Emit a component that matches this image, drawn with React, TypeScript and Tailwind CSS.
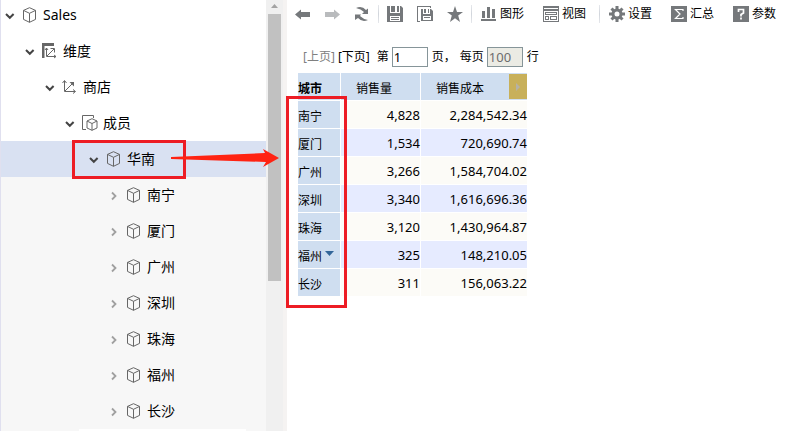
import type { ReactNode } from "react";

type NodeIcon = "cube" | "dimensions" | "axes" | "members";
type TreeItem = { name: string; depth: number; icon: NodeIcon; open?: boolean };

const tree: TreeItem[] = [
  { name: "Sales", depth: 0, icon: "cube", open: true },
  { name: "维度", depth: 1, icon: "dimensions", open: true },
  { name: "商店", depth: 2, icon: "axes", open: true },
  { name: "成员", depth: 3, icon: "members", open: true },
];

const cities = ["南宁", "厦门", "广州", "深圳", "珠海", "福州", "长沙"];

const rows = [
  ["南宁", "4,828", "2,284,542.34"],
  ["厦门", "1,534", "720,690.74"],
  ["广州", "3,266", "1,584,704.02"],
  ["深圳", "3,340", "1,616,696.36"],
  ["珠海", "3,120", "1,430,964.87"],
  ["福州", "325", "148,210.05"],
  ["长沙", "311", "156,063.22"],
];

const indents = ["pl-1", "pl-6", "pl-11", "pl-16", "pl-[88px]", "pl-[108px]"];

const cubePath = "M7.5 .7 13.5 3.4V12.4L7.5 15.3 1.5 12.4V3.4ZM1.5 3.4 7.5 6.3 13.5 3.4M7.5 6.3V15.3";

function TreeIcon({ kind }: { kind: NodeIcon }) {
  return (
    <svg width="16" height="16" viewBox="0 0 16 16" fill="none" stroke="#666" strokeWidth="1" aria-hidden="true">
      {kind === "cube" && <path d={cubePath} />}
      {kind === "dimensions" && (
        <>
          <path d="M0 0H12V3H2.5V15H0Z" fill="#666" stroke="none" />
          <path d="M4.5 5V13.5H14M3 7 4.5 5 6 7M12 12 14 13.5 12 15M5 13 12 6M8.5 5.5H12.5V9.5" />
        </>
      )}
      {kind === "axes" && (
        <>
          <path d="M2.5 2V12.5H13M.5 4 2.5 1.5 4.5 4M11 10.5 13.5 12.5 11 14.5M3 12 11 4" />
          <path d="M7.5 3H12V7.5Z" fill="#666" stroke="none" />
        </>
      )}
      {kind === "members" && (
        <>
          <path d="M4 14.5H.5V.5H11.5V3" />
          <path d="M10 3.7 15 6V13L10 15.3 5 13V6ZM5 6 10 8.5 15 6M10 8.5V15.3" />
        </>
      )}
    </svg>
  );
}

function TreeRow({ item, selected = false }: { item: TreeItem; selected?: boolean }) {
  return (
    <button
      type="button"
      aria-expanded={!!item.open}
      className={`flex h-9 w-full items-center text-left ${indents[item.depth]} ${selected ? "bg-[#d9e1f2]" : ""}`}
    >
      <svg className="mt-0.5" width="10" height="10" viewBox="0 0 10 10" fill="none" aria-hidden="true">
        {item.open ? (
          <path d="M1 3 4.8 6.8 8.6 3" stroke="#444" strokeWidth="2" />
        ) : (
          <path d="M3 1.5 6.5 5 3 8.5" stroke="#a0a0a0" strokeWidth="1.8" />
        )}
      </svg>
      <span className="ml-[7px]">
        <TreeIcon kind={item.icon} />
      </span>
      <span className="ml-[5px]">{item.name}</span>
    </button>
  );
}

function Tool({ label, text, children }: { label: string; text?: string; children: ReactNode }) {
  return (
    <button type="button" aria-label={label} className="flex shrink-0 items-center gap-[3px]">
      <svg width="16" height="16" viewBox="0 0 16 16" fill="#75787b" aria-hidden="true">
        {children}
      </svg>
      {text && <span>{text}</span>}
    </button>
  );
}

function Divider() {
  return <div className="h-[18px] w-px shrink-0 bg-gradient-to-b from-gray-200 via-gray-300 to-gray-200" />;
}

function Toolbar() {
  return (
    <div role="toolbar" className="flex h-7 items-center pl-2 whitespace-nowrap">
      <div className="flex items-center gap-3.5">
        <Tool label="后退">
          <path d="M0 8.5 6 3.5V6H15V11H6V13.5Z" />
        </Tool>
        <Tool label="前进">
          <path d="M15 8.5 9 3.5V6H0V11H9V13.5Z" fill="#b9bbbd" />
        </Tool>
        <Tool label="刷新">
          <path d="M1 2Q7-.5 11 4L13 2.5V8H7L9 6Q6 3 1 2Z" />
          <path d="M13 14Q7 16.5 3 12L0 14V8.5H6L5 10Q8 13 13 14Z" />
        </Tool>
      </div>
      <div className="mr-2 ml-[7px]">
        <Divider />
      </div>
      <div className="flex items-center gap-3.5">
        <Tool label="保存">
          <path d="M0 0H14L16 2V16H0Z" />
          <path d="M3 0H4V7H3ZM8 0H10V6H8ZM12 0H13V7H12ZM3 6H13V7H3ZM3 10H13V15H3Z" fill="#fff" />
          <path d="M4 11H12V12H4ZM4 13H12V14H4Z" />
        </Tool>
        <Tool label="另存为">
          <path d="M0 0H14V2H13V1H1V15H3V16H0Z" />
          <path d="M4 3H14L16 5V15H4Z" />
          <path d="M6 3H7V8H6ZM9 3H11V7H9ZM12 3H13V8H12ZM6 7H13V8H6ZM6 10H14V14H6Z" fill="#fff" />
          <path d="M7 11H13V12H7Z" />
        </Tool>
        <Tool label="收藏">
          <path d="M8 0 10 6H16L11.2 9.6 13 16 8 12.2 3 16 4.8 9.6 0 6H6Z" />
        </Tool>
      </div>
      <div className="mr-[9px] ml-2">
        <Divider />
      </div>
      <div className="flex items-center gap-[19px]">
        <Tool label="图形" text="图形">
          <path d="M1 5H4V12H1ZM6 1H9V12H6ZM11 3H14V12H11ZM0 13H15V15H0Z" />
        </Tool>
        <Tool label="视图" text="视图">
          <path fillRule="evenodd" d="M0 0H16V16H0ZM1 5V15H15V5Z" />
          <path fill="#fff" d="M1 2H15V3H1Z" />
          <path fillRule="evenodd" d="M2 6H14V9H2ZM3 7V8H13V7ZM2 10H6V14H2ZM3 11V13H5V11ZM7 10H14V14H7ZM8 11V13H13V11Z" />
        </Tool>
      </div>
      <div className="mr-[9px] ml-[13px]">
        <Divider />
      </div>
      <div className="flex items-center gap-[19px]">
        <Tool label="设置" text="设置">
          <g stroke="#75787b" strokeWidth="3">
            <path d="M8 0V4M8 12V16M0 8H4M12 8H16M2.5 2.5 5 5M11 11 13.5 13.5M2.5 13.5 5 11M11 5 13.5 2.5" />
            <circle cx="8" cy="8" r="4" fill="none" />
          </g>
        </Tool>
        <Tool label="汇总" text="汇总">
          <path d="M0 0H16V16H0Z" />
          <path d="M12 5V3.5H4.5L9 8 4.5 12.5H12V11" fill="none" stroke="#fff" strokeWidth="1.2" />
        </Tool>
        <Tool label="参数" text="参数">
          <path d="M0 0H16V16H0Z" />
          <path d="M5.5 6V3.5H10.5V7L8 8.5V10.5M8 11.5V13.5" fill="none" stroke="#fff" strokeWidth="1.7" />
        </Tool>
      </div>
    </div>
  );
}

function Pager() {
  return (
    <div className="mt-[19px] flex h-5 items-center pl-4 whitespace-nowrap">
      <a href="#prev" className="text-[#808080]">[上页]</a>
      <a href="#next" className="ml-[3px]">[下页]</a>
      <label htmlFor="page" className="ml-[7px]">第</label>
      <input
        id="page"
        defaultValue="1"
        className="ml-[3px] h-5 w-9 border border-[#869599] bg-white px-px text-[13px]"
      />
      <span className="ml-1">页，</span>
      <label htmlFor="size" className="ml-1">每页</label>
      <input
        id="size"
        defaultValue="100"
        disabled
        className="ml-[3px] h-5 w-9 border border-[#869599] bg-[#ebebe4] px-px text-[13px] text-[#6d6d6d]"
      />
      <span className="ml-1">行</span>
    </div>
  );
}

function DataTable() {
  return (
    <div className="relative mt-[5px] ml-2.5 w-[231px]">
      <table className="w-full table-fixed border-separate border-spacing-px">
        <colgroup>
          <col className="w-[42px]" />
          <col className="w-[79px]" />
          <col />
        </colgroup>
        <thead>
          <tr className="h-[27px] bg-[#cfdef0] text-left">
            <th scope="col" className="p-0 pt-1">城市</th>
            <th scope="col" className="p-0 pt-1 pl-[15px] font-normal">销售量</th>
            <th scope="col" className="p-0 font-normal">
              <div className="flex items-center justify-between pl-[15px]">
                <span className="pt-1">销售成本</span>
                <button type="button" aria-label="展开" className="flex h-[25px] w-[18px] items-center justify-center bg-[#c8b05a]">
                  <svg width="4" height="8" viewBox="0 0 4 8" fill="#b5b1a6" aria-hidden="true">
                    <path d="M0 0 4 4 0 8Z" />
                  </svg>
                </button>
              </div>
            </th>
          </tr>
        </thead>
        <tbody>
          {rows.map(([city, count, cost]) => (
            <tr key={city} className="h-[27px] bg-[#fcfbf7] text-right even:bg-[#e6ebff]">
              <th scope="row" className="bg-[#cfdef0] p-0 pt-1 text-left font-normal">
                <span className="flex items-center gap-[3px]">
                  {city}
                  {city === "福州" && (
                    <svg className="mb-1.5" width="9" height="5" viewBox="0 0 9 5" fill="#336699" aria-hidden="true">
                      <path d="M0 0H9L4.5 5Z" />
                    </svg>
                  )}
                </span>
              </th>
              <td className="p-0 pt-0.5 text-[13px]">{count}</td>
              <td className="p-0 pt-0.5 text-[13px]">{cost}</td>
            </tr>
          ))}
        </tbody>
      </table>
      <div className="pointer-events-none absolute -left-[11px] top-6 h-[212px] w-[61px] border-3 border-[#ed1c24]" />
    </div>
  );
}

export default function App() {
  return (
    <div className="flex h-screen overflow-hidden bg-white font-['Noto_Sans','Noto_Sans_CJK_SC',sans-serif] text-black">
      <aside className="flex w-[287px] shrink-0 border-l border-[#e0e0ef]">
        <nav className="min-w-0 flex-1 text-sm">
          <div className="-mt-[3px]">
            {tree.map((item) => (
              <TreeRow key={item.name} item={item} />
            ))}
          </div>
          <div className="relative">
            <TreeRow item={{ name: "华南", depth: 4, icon: "cube", open: true }} selected />
            <div className="pointer-events-none absolute -top-px left-[71px] h-[39px] w-[114px] border-3 border-[#ed1c24]" />
            <svg
              className="pointer-events-none absolute top-2 left-[170px] z-10"
              width="108"
              height="18"
              viewBox="0 0 108 18"
              fill="#ff2312"
              aria-hidden="true"
            >
              <path d="M0 8 94 4 92 0 108 9 92 18 95 13 0 10Z" />
            </svg>
          </div>
          <div className="bg-[#f7f7f7]">
            {cities.map((name) => (
              <TreeRow key={name} item={{ name, depth: 5, icon: "cube" }} />
            ))}
            <div className="mr-5 ml-[78px] h-9 bg-white" />
          </div>
        </nav>
        <div className="flex w-[17px] flex-col items-center bg-[#f0f0f0]">
          <svg className="my-1" width="7" height="6" viewBox="0 0 7 6" fill="#a3a3a3" aria-hidden="true">
            <path d="M3.5 0 7 4H0Z" />
          </svg>
          <div className="h-[267px] w-[13px] bg-[#c1c1c1]" />
        </div>
        <div className="w-1 bg-[#f5f3f2]" />
      </aside>
      <main className="min-w-0 flex-1 text-xs">
        <Toolbar />
        <Pager />
        <DataTable />
      </main>
    </div>
  );
}
